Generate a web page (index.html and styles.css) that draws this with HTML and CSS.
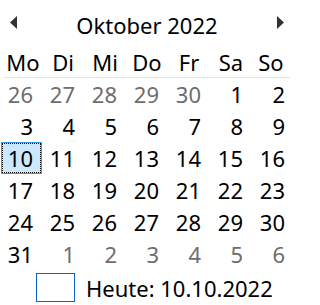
FILE: index.html
```html
<!DOCTYPE html>
<html lang="de">
<head>
<meta charset="utf-8">
<title>Kalender</title>
<link rel="stylesheet" href="styles.css">
</head>
<body>
<div class="cal">
  <div class="title">
    <svg class="arrow" width="9" height="14" viewBox="0 0 9 14"><polygon points="8,0 8,13 1,6.5" fill="#333"/></svg>
    <span class="month">Oktober 2022</span>
    <svg class="arrow" width="9" height="14" viewBox="0 0 9 14"><polygon points="1,0 1,13 8,6.5" fill="#333"/></svg>
  </div>
  <div class="week head">
    <span>Mo</span><span>Di</span><span>Mi</span><span>Do</span><span>Fr</span><span>Sa</span><span>So</span>
  </div>
  <div class="days">
    <span class="other">26</span><span class="other">27</span><span class="other">28</span><span class="other">29</span><span class="other">30</span><span>1</span><span>2</span>
    <span>3</span><span>4</span><span>5</span><span>6</span><span>7</span><span>8</span><span>9</span>
    <span class="sel">10</span><span>11</span><span>12</span><span>13</span><span>14</span><span>15</span><span>16</span>
    <span>17</span><span>18</span><span>19</span><span>20</span><span>21</span><span>22</span><span>23</span>
    <span>24</span><span>25</span><span>26</span><span>27</span><span>28</span><span>29</span><span>30</span>
    <span>31</span><span class="other">1</span><span class="other">2</span><span class="other">3</span><span class="other">4</span><span class="other">5</span><span class="other">6</span>
  </div>
  <div class="today">
    <span class="todaybox"></span>
    <span class="todaytext">Heute: 10.10.2022</span>
  </div>
</div>
</body>
</html>
```
FILE: styles.css
```css
html, body {
  margin: 0;
  padding: 0;
  background: #fff;
}
.cal {
  width: 294px;
  height: 305px;
  font-family: "Noto Sans", "Open Sans", sans-serif;
  color: #000;
  display: flex;
  flex-direction: column;
}
.title {
  height: 46px;
  display: flex;
  align-items: center;
  justify-content: space-between;
  padding: 0 9px 0 9px;
  box-sizing: border-box;
}
.arrow {
  display: block;
}
.month {
  font-size: 22px;
  line-height: 1;
  margin-top: 3px;
}
.week {
  display: grid;
  grid-template-columns: repeat(7, 42px);
  height: 32px;
  font-size: 22px;
  align-items: center;
  text-align: center;
}
.head {
  border-bottom: 1px solid #e3e3e3;
  margin: 0 4px;
  grid-template-columns: 38px repeat(5, 42px) 38px;
  box-sizing: border-box;
}
.days {
  display: grid;
  grid-template-columns: repeat(7, 42px);
  grid-auto-rows: 32px;
  font-size: 22px;
}
.days span {
  display: flex;
  align-items: center;
  justify-content: flex-end;
  padding-right: 9px;
  box-sizing: border-box;
}
.days .other {
  color: #6d6d6d;
}
.days .sel {
  background: #cce8ff;
  border: 1px solid #26a0da;
  outline: 1px dotted #000;
  outline-offset: -2px;
  margin-left: 1px;
  padding-right: 8px;
}
.today {
  flex: 1;
  display: flex;
  align-items: center;
  padding-left: 36px;
  gap: 11px;
}
.todaybox {
  width: 39px;
  height: 29px;
  border: 1px solid #0066cc;
  box-sizing: border-box;
}
.todaytext {
  font-size: 22px;
}
```
